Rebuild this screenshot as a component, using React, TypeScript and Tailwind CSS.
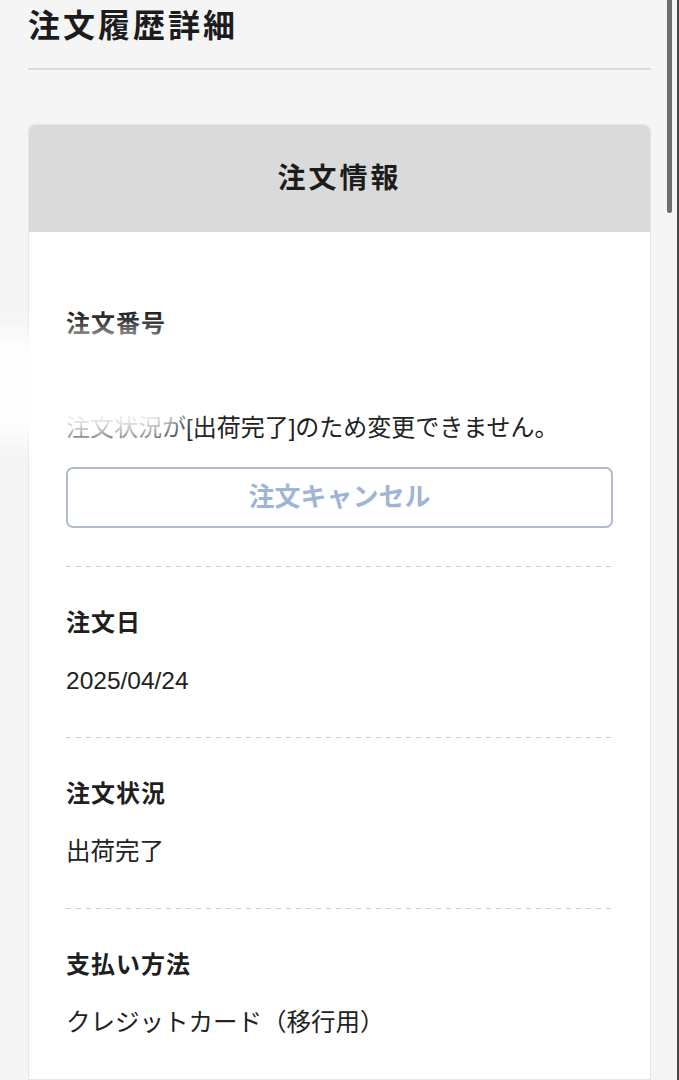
const font = { fontFamily: '"Liberation Sans", "Noto Sans CJK JP", sans-serif' };

function Dashed() {
  return <div className="h-px w-full bg-[repeating-linear-gradient(90deg,#cdcdcd_0_5px,transparent_5px_10px)]" />;
}

function Field({ label, value }: { label: string; value: string }) {
  return <div className="py-[38px]">
    <p className="text-[24px] font-bold leading-[36px] tracking-[1px] text-[#1f1f1f]">{label}</p>
    <p className="mt-[22px] text-[24.5px] leading-[36px] text-[#222]">{value}</p>
  </div>;
}

export default function App() {
  return <main style={font} className="relative h-[1080px] overflow-hidden bg-[#f5f5f5] px-[28px]">
    <header className="border-b-2 border-[#dcdcdc] pt-[2px] pb-[18px]">
      <h1 className="text-[32px] font-bold leading-[48px] tracking-[3px] text-[#1c1c1c]">注文履歴詳細</h1>
    </header>

    <section className="mt-[54px] rounded-t-[6px] border border-[#e6e6e6] bg-white">
      <div className="flex h-[107px] items-center justify-center rounded-t-[6px] bg-[#dadada]">
        <h2 className="text-[28px] font-bold tracking-[3px] text-[#1c1c1c]">注文情報</h2>
      </div>

      <div className="px-[37px] pt-[36px]">
        <div className="pt-[38px] pb-[38px]">
          <p className="text-[24px] font-bold leading-[36px] tracking-[1px] text-[#1f1f1f]">注文番号</p>
          <p className="mt-[22px] h-[36px]" />
          <p className="mt-[10px] text-[24px] leading-[36px] text-[#222]">注文状況が[出荷完了]のため変更できません。</p>
          <button className="mt-[21px] flex h-[61px] w-full items-center justify-center rounded-[7px] border-2 border-[#b1bccb] bg-white text-[26px] font-bold text-[#9fb5d6]">注文キャンセル</button>
        </div>
        <Dashed />
        <Field label="注文日" value="2025/04/24" />
        <Dashed />
        <Field label="注文状況" value="出荷完了" />
        <Dashed />
        <Field label="支払い方法" value="クレジットカード（移行用）" />
      </div>
    </section>

    {/* white smudge over the order number */}
    <div className="pointer-events-none absolute left-[-70px] top-[334px] h-[104px] w-[265px] rounded-full bg-white opacity-95 blur-[12px]" />

    {/* overlay scrollbar */}
    <div className="absolute right-[7px] top-0 h-[213px] w-[5px] rounded-b-full bg-[#6e6e6e]" />
    <div className="absolute right-0 top-0 h-full w-[2px] bg-[#4a4a4a]" />
  </main>;
}
